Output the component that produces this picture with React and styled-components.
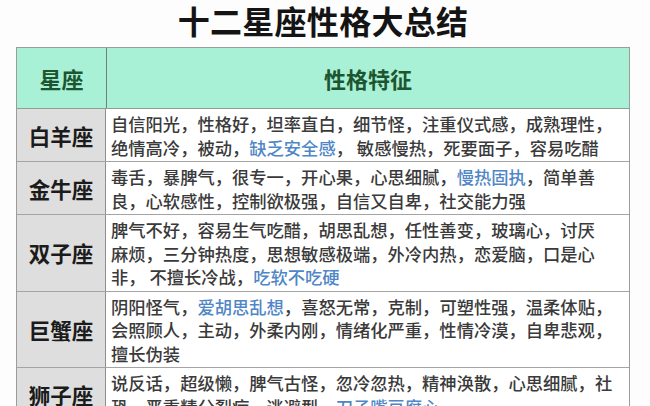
import React from "react";
import styled, { createGlobalStyle } from "styled-components";

const GlobalStyle = createGlobalStyle`
  html, body { margin: 0; padding: 0; background: #ffffff; }
  body { font-family: "Noto Sans CJK SC", "Noto Sans", sans-serif; }
`;

const Page = styled.div`
  width: 650px;
  height: 406px;
  overflow: hidden;
  padding: 0 20px 0 16px;
  box-sizing: border-box;
  background: #fdfdfd;
`;

const Title = styled.h1`
  margin: 0 0 5px;
  height: 42px;
  line-height: 41px;
  text-align: center;
  font-size: 32px;
  font-weight: 700;
  color: #141414;
  letter-spacing: 0.3px;
`;

const Table = styled.div`
  border: 1px solid #9c9c9c;
  border-bottom: none;
`;

const Row = styled.div`
  display: grid;
  grid-template-columns: 89px 1fr;
  border-bottom: 1px solid #a4a4a4;
`;

const HeaderRow = styled(Row)`
  height: 60px;
  background: #a9f1d6;
  border-bottom: 1.5px solid #8c9e96;
`;

const HeaderCell = styled.div`
  display: flex;
  align-items: center;
  justify-content: center;
  font-size: 22px;
  font-weight: 700;
  color: #1c5631;
  border-left: ${(p) => (p.$divider ? "1.5px solid #6f8278" : "none")};
`;

const NameCell = styled.div`
  display: flex;
  align-items: center;
  justify-content: center;
  background: #dedede;
  font-size: 21.5px;
  font-weight: 700;
  color: #1b1b1b;
  border-right: 1px solid #8e8e8e;
`;

const TraitCell = styled.div`
  background: #ffffff;
  padding: 3px 4px 2px 5px;
  font-size: 17.3px;
  font-weight: 500;
  line-height: 23.5px;
  color: #3a3a3a;
`;

const Line = styled.div`
  white-space: nowrap;
`;

const Highlight = styled.span`
  color: #4f86c6;
`;

const rows = [
  {
    name: "白羊座",
    lines: [
      [["自信阳光，性格好，坦率直白，细节怪，注重仪式感，成熟理性，"]],
      [["绝情高冷，被动，"], ["缺乏安全感", true], ["， 敏感慢热，死要面子，容易吃醋"]],
    ],
  },
  {
    name: "金牛座",
    lines: [
      [["毒舌，暴脾气，很专一，开心果，心思细腻，"], ["慢热固执", true], ["，简单善"]],
      [["良，心软感性，控制欲极强，自信又自卑，社交能力强"]],
    ],
  },
  {
    name: "双子座",
    lines: [
      [["脾气不好，容易生气吃醋，胡思乱想，任性善变，玻璃心，讨厌"]],
      [["麻烦，三分钟热度，思想敏感极端，外冷内热，恋爱脑，口是心"]],
      [["非， 不擅长冷战，"], ["吃软不吃硬", true]],
    ],
  },
  {
    name: "巨蟹座",
    lines: [
      [["阴阳怪气，"], ["爱胡思乱想", true], ["，喜怒无常，克制，可塑性强，温柔体贴，"]],
      [["会照顾人，主动，外柔内刚，情绪化严重，性情冷漠，自卑悲观，"]],
      [["擅长伪装"]],
    ],
  },
  {
    name: "狮子座",
    lines: [
      [["说反话，超级懒，脾气古怪，忽冷忽热，精神涣散，心思细腻，社"]],
      [["恐，严重精分裂症，逃避型，"], ["刀子嘴豆腐心", true]],
    ],
  },
];

export default function App() {
  return (
    <>
      <GlobalStyle />
      <Page>
        <Title>十二星座性格大总结</Title>
        <Table>
          <HeaderRow>
            <HeaderCell>星座</HeaderCell>
            <HeaderCell $divider>性格特征</HeaderCell>
          </HeaderRow>
          {rows.map((r) => (
            <Row key={r.name}>
              <NameCell>{r.name}</NameCell>
              <TraitCell>
                {r.lines.map((segs, i) => (
                  <Line key={i}>
                    {segs.map(([t, hl], j) =>
                      hl ? <Highlight key={j}>{t}</Highlight> : <span key={j}>{t}</span>
                    )}
                  </Line>
                ))}
              </TraitCell>
            </Row>
          ))}
        </Table>
      </Page>
    </>
  );
}
